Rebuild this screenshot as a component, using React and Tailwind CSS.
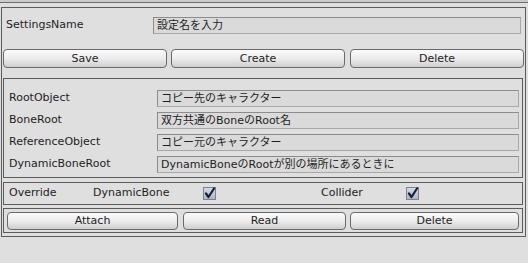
const font = { fontFamily: '"DejaVu Sans", "Noto Sans CJK JP", sans-serif' }

function Field({ value, className = '' }) {
    return (
        <div className={`h-[17px] border border-[#8c8c8c] border-b-[#a8a8a8] border-r-[#a8a8a8] bg-[#dadada] flex items-center pl-[3px] text-[11px] leading-none text-[#1e1e1e] ${className}`}>
            {value}
        </div>
    )
}

function Btn({ label, className = '' }) {
    return (
        <button className={`rounded-[4px] border border-[#6a6a6a] bg-gradient-to-b from-[#fbfbfb] via-[#ececec] to-[#cfcfcf] text-[11px] leading-none text-[#1e1e1e] flex items-center justify-center ${className}`}>
            {label}
        </button>
    )
}

function Check() {
    return (
        <svg width="13" height="13" viewBox="0 0 13 13">
            <defs>
                <linearGradient id="cb" x1="0" y1="0" x2="0" y2="1">
                    <stop offset="0" stopColor="#d6dbe3" />
                    <stop offset="1" stopColor="#aeb6c4" />
                </linearGradient>
            </defs>
            <rect x="0.5" y="0.5" width="12" height="12" fill="url(#cb)" stroke="#7d8390" />
            <path d="M3 6.5 L5.5 10 L11 1.5" fill="none" stroke="#15213d" strokeWidth="2.2" strokeLinecap="round" strokeLinejoin="round" />
        </svg>
    )
}

const rows = [
    ['RootObject', 'コピー先のキャラクター'],
    ['BoneRoot', '双方共通のBoneのRoot名'],
    ['ReferenceObject', 'コピー元のキャラクター'],
    ['DynamicBoneRoot', 'DynamicBoneのRootが別の場所にあるときに'],
]

export default function App() {
    return (
        <div className="w-[528px] h-[263px] bg-[#dfdfdf] overflow-hidden text-[#1e1e1e]" style={font}>
            <div className="h-[2px] bg-[#cacaca]" />
            <div className="h-px bg-[#6e6e6e]" />
            <div className="mt-[4px] ml-px w-[525px] h-[230px] border border-[#5c5c5c] flex flex-col">
                <div className="mt-[9px] flex items-center">
                    <span className="w-[151px] pl-[4px] text-[11px]">SettingsName</span>
                    <Field value="設定名を入力" className="w-[368px]" />
                </div>
                <div className="mt-[15px] flex pl-px">
                    <Btn label="Save" className="w-[164px] h-[19px]" />
                    <Btn label="Create" className="ml-[4px] w-[174px] h-[19px]" />
                    <Btn label="Delete" className="ml-[5px] w-[174px] h-[19px]" />
                </div>
                <div className="mt-[10px] ml-px w-[520px] h-[100px] border border-[#5c5c5c] pt-[11px] flex flex-col gap-[5px]">
                    {rows.map(([label, value]) => (
                        <div key={label} className="flex items-center">
                            <span className="w-[153px] pl-[5px] text-[11px]">{label}</span>
                            <Field value={value} className="w-[362px]" />
                        </div>
                    ))}
                </div>
                <div className="mt-[4px] ml-px w-[520px] h-[23px] border border-[#5c5c5c] flex items-center text-[11px]">
                    <span className="w-[89px] pl-[5px]">Override</span>
                    <span className="w-[110px]">DynamicBone</span>
                    <Check />
                    <span className="ml-[105px] w-[85px]">Collider</span>
                    <Check />
                </div>
                <div className="mt-[3px] ml-px w-[520px] h-[25px] border border-[#5c5c5c] flex items-center pl-[3px]">
                    <Btn label="Attach" className="w-[171px] h-[18px]" />
                    <Btn label="Read" className="ml-[5px] w-[163px] h-[18px]" />
                    <Btn label="Delete" className="ml-[4px] w-[169px] h-[18px]" />
                </div>
            </div>
        </div>
    )
}
